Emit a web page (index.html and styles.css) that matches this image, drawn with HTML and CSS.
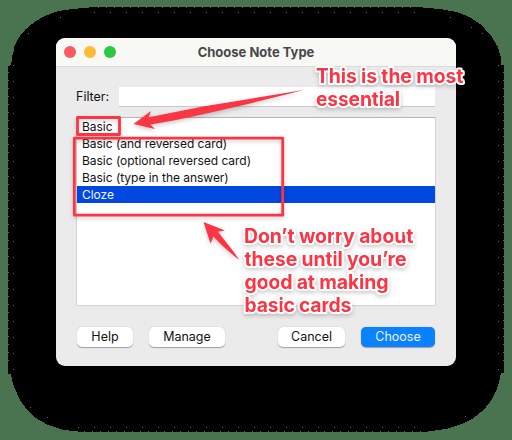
FILE: index.html
```html
<!DOCTYPE html>
<html lang="en">
<head>
<meta charset="utf-8">
<title>Choose Note Type</title>
<link rel="stylesheet" href="styles.css">
</head>
<body>
<svg class="shadow" viewBox="0 0 512 440" aria-hidden="true">
  <path d="M8 66H10L12 61V56L14 51V47C20 31 36 17 59 11L72 9L94 7H417L440 9L457 12C475 17 490 30 498 47L501 58V65H504V373H501L499 382L497 389C491 405 479 417 462 424L446 429L424 432H82L64 430L48 425C32 418 20 405 15 389L12 380L11 374H8Z"/>
  <g class="specks">
    <path d="M13.500 65V378M498.500 65V378" stroke-dasharray="1 15"/>
    <path d="M8.500 72V368M503.500 72V368" stroke-dasharray="1 7"/>
    <path d="M94 12.500H430M78 427.500H430" stroke-dasharray="1 15"/>
    <path d="M98 7.500H417M84 431.500H424" stroke-dasharray="1 7"/>
    <path d="M28 33.500h1M60 17.500h1M450 17.500h1M471 27.500h1M482 33.500h1M30 407.500h1M47 417.500h1M465 416.500h1"/>
  </g>
</svg>
<main class="window">
  <header class="titlebar">
    <div class="lights"><i class="red"></i><i class="yellow"></i><i class="green"></i></div>
    <h1>Choose Note Type</h1>
  </header>
  <section class="content">
    <label class="filter"><span>Filter:</span><input type="text"></label>
    <ul class="list">
      <li>Basic</li>
      <li>Basic (and reversed card)</li>
      <li>Basic (optional reversed card)</li>
      <li>Basic (type in the answer)</li>
      <li class="selected">Cloze</li>
    </ul>
    <footer class="actions">
      <button class="help">Help</button>
      <button class="manage">Manage</button>
      <button class="cancel">Cancel</button>
      <button class="choose">Choose</button>
    </footer>
  </section>
</main>
<svg class="notes" viewBox="0 0 512 440">
  <g class="marks">
    <rect x="77.500" y="117.500" width="42" height="17"/>
    <rect x="74.300" y="138.200" width="208.400" height="77"/>
    <path class="arrow" d="M303.500 90L203 106.500L148.700 117.300L151 111L133.500 124L154.800 129L150.500 124.500C190 118 245 105 303.500 90Z"/>
    <path class="arrow" d="M203.500 222L225 230.500L218 231.800C224 240 232 249 239.500 260C230 253 221 245 213.500 236.500L210.500 243.500Z"/>
  </g>
  <g class="callout">
    <text x="316" y="83.200" textLength="147.500">This is the most</text>
    <text x="316" y="106.200" textLength="84">essential</text>
    <text x="244" y="243" textLength="169.500">Don’t worry about</text>
    <text x="244.500" y="266" textLength="162">these until you’re</text>
    <text x="244.500" y="289" textLength="144">good at making</text>
    <text x="244.500" y="311.800" textLength="107">basic cards</text>
  </g>
</svg>
</body>
</html>
```
FILE: styles.css
```css
* { box-sizing: border-box; }
body {
  margin: 0;
  width: 512px;
  height: 440px;
  padding: 38px 56px;
  overflow: hidden;
  position: relative;
  background: #49744f;
  font-family: Inter, "Liberation Sans", sans-serif;
  color: #111;
}
.shadow, .notes {
  position: absolute;
  inset: 0;
  width: 512px;
  height: 440px;
}
.shadow path { shape-rendering: crispEdges; }
.specks path { fill: none; stroke: #49744f; stroke-width: 1; }
.window {
  position: relative;
  width: 400px;
  height: 328px;
  border-radius: 9px;
  overflow: hidden;
  background: #ebebeb;
}
.titlebar {
  display: flex;
  align-items: center;
  height: 28.500px;
  padding: 0 8px;
  background: #f8f8f5;
  border-bottom: 1px solid #d9d9de;
}
.lights { display: flex; gap: 8px; width: 52px; }
.lights i { width: 12px; height: 12px; border-radius: 50%; }
.red { background: #fa5960; }
.yellow { background: #fdbc32; }
.green { background: #2bc840; }
h1 {
  flex: 1;
  margin: 0 52px 0 0;
  text-align: center;
  font-size: 13px;
  line-height: 20px;
  font-weight: 700;
  color: #48484a;
  white-space: nowrap;
}
.content { padding: 20.500px 20px 0; }
.filter {
  display: flex;
  align-items: center;
  height: 20px;
  font-size: 12.500px;
  line-height: 20px;
}
.filter span { width: 43px; white-space: nowrap; }
input {
  width: 316px;
  height: 20px;
  padding: 0 4px;
  border: 0;
  border-bottom: 1px solid #c8c8cc;
  background: #fff;
}
.list {
  height: 189px;
  margin: 10px 0 0;
  padding: 0;
  list-style: none;
  background: #fff;
  border: 1px solid #d4d4d4;
  border-top-color: #b4b4b9;
  font-size: 12px;
  letter-spacing: -0.030px;
}
.list li { height: 17px; line-height: 17px; padding-left: 5px; white-space: nowrap; }
.list .selected { background: #0048df; color: #f4f7ff; }
.actions { display: flex; margin-top: 21px; padding: 0 1px; }
button {
  height: 20px;
  padding: 0;
  border: 0;
  border-radius: 5px;
  background: #fff;
  box-shadow: 0 0.500px 1px #0005;
  color: #111;
  font: 12.500px/20px Inter, "Liberation Sans", sans-serif;
}
.help { width: 56px; }
.manage { width: 76px; margin-left: 16px; }
.cancel { width: 67px; margin-left: auto; }
.choose { width: 74px; margin-left: 16px; background: #0a82ff; color: #e9f4ff; }
.marks { filter: drop-shadow(0 2px 2px #0003); }
.marks rect { fill: none; stroke: #fc3545; stroke-width: 2.800; stroke-linejoin: round; }
.arrow { fill: #fc3545; }
.callout {
  font-family: Inter, sans-serif;
  font-size: 19.500px;
  font-weight: 650;
  fill: #fc3545;
  stroke: #fff;
  stroke-width: 4px;
  stroke-linejoin: round;
  paint-order: stroke fill;
  filter: drop-shadow(0 2px 2px #0003);
}
```
